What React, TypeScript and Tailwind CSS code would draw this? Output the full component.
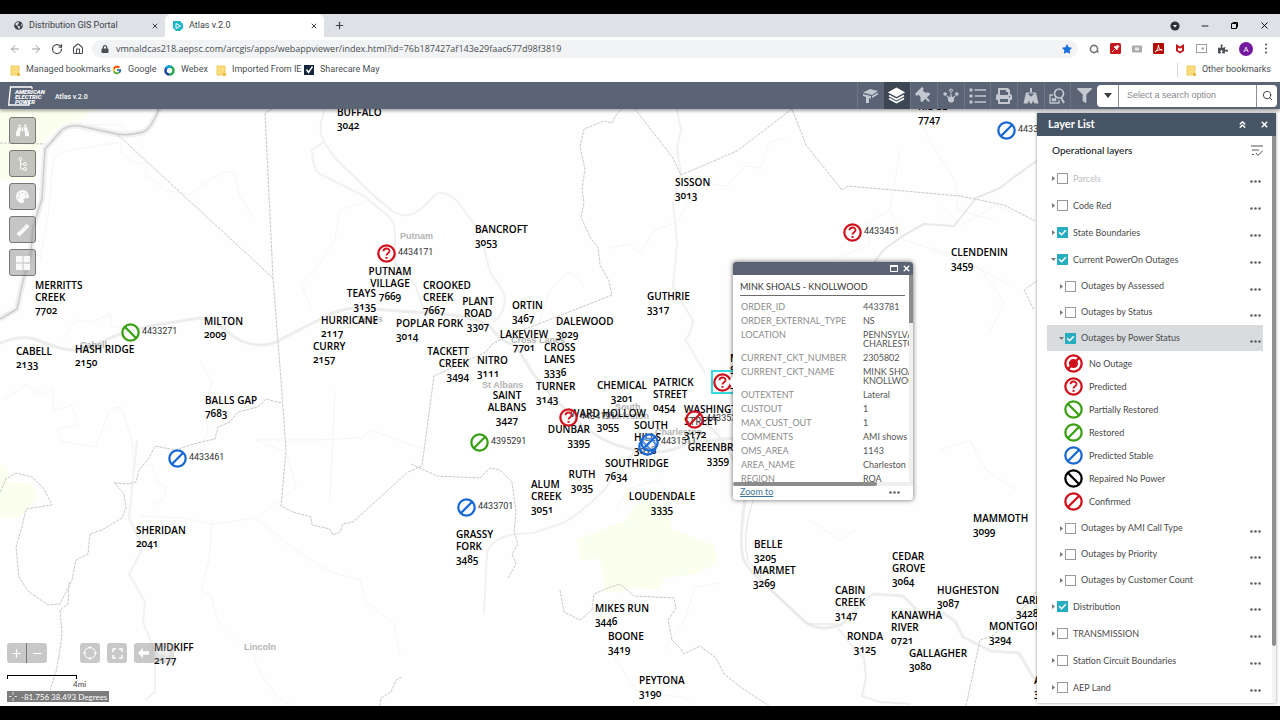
import React from 'react';
import {
  FaBinoculars,
  FaFilter,
  FaGlobeAmericas,
  FaLock,
  FaPalette,
  FaPrint,
  FaPuzzlePiece,
  FaStar,
  FaThumbtack,
} from 'react-icons/fa';
import { FcGoogle } from 'react-icons/fc';
import {
  ArrowLeft,
  ArrowRight,
  ChevronsUp,
  House,
  Minus,
  Plus,
  RotateCw,
  Search,
  X,
} from 'lucide-react';

type Align = 'left' | 'center' | 'right';
type PinKind = 'none' | 'question' | 'back' | 'slash';

interface Station {
  name: string[];
  code: string;
  x: number;
  y: number;
  align?: Align;
}

interface Pin {
  kind: PinKind;
  color: string;
  x: number;
  y: number;
  id?: string;
}

interface Layer {
  name: string;
  checked?: boolean;
  open?: boolean;
  muted?: boolean;
}

const RED = '#d0101a';
const GREEN = '#3aa013';
const BLUE = '#1868d4';

// y is the top of the first text line, measured from the top of the map
const stations: Station[] = [
  { name: ['MERRITTS', 'CREEK'], code: '7702', x: 35, y: 170 },
  { name: ['CABELL'], code: '2133', x: 16, y: 236 },
  { name: ['HASH RIDGE'], code: '2150', x: 75, y: 234 },
  { name: ['MILTON'], code: '2009', x: 204, y: 206 },
  { name: ['BALLS GAP'], code: '7683', x: 205, y: 285 },
  { name: ['SHERIDAN'], code: '2041', x: 136, y: 415 },
  { name: ['MIDKIFF'], code: '2177', x: 154, y: 532 },
  { name: ['BUFFALO'], code: '3042', x: 337, y: -3 },
  { name: ['HURRICANE'], code: '2117', x: 321, y: 205 },
  { name: ['CURRY'], code: '2157', x: 313, y: 231 },
  { name: ['PUTNAM', 'VILLAGE'], code: '7669', x: 390, y: 156, align: 'center' },
  { name: ['TEAYS'], code: '3135', x: 376, y: 178, align: 'right' },
  { name: ['CROOKED', 'CREEK'], code: '7667', x: 423, y: 170 },
  { name: ['POPLAR FORK'], code: '3014', x: 396, y: 208 },
  { name: ['PLANT', 'ROAD'], code: '3307', x: 478, y: 186, align: 'center' },
  { name: ['BANCROFT'], code: '3053', x: 475, y: 114 },
  { name: ['ORTIN'], code: '3467', x: 512, y: 190 },
  { name: ['LAKEVIEW'], code: '7701', x: 524, y: 219, align: 'center' },
  { name: ['DALEWOOD'], code: '3029', x: 556, y: 206 },
  { name: ['TACKETT', 'CREEK'], code: '3494', x: 469, y: 236, align: 'right' },
  { name: ['NITRO'], code: '3111', x: 477, y: 245 },
  { name: ['CROSS', 'LANES'], code: '3336', x: 544, y: 232 },
  { name: ['TURNER'], code: '3143', x: 536, y: 271 },
  { name: ['SAINT', 'ALBANS'], code: '3427', x: 507, y: 280, align: 'center' },
  { name: ['CHEMICAL'], code: '3201', x: 622, y: 270, align: 'center' },
  { name: ['PATRICK', 'STREET'], code: '0454', x: 653, y: 267 },
  { name: ['WARD HOLLOW'], code: '3055', x: 608, y: 298, align: 'center' },
  { name: ['SOUTH', 'HILLS'], code: '3078', x: 634, y: 310 },
  { name: ['DUNBAR'], code: '3395', x: 590, y: 314, align: 'right' },
  { name: ['WASHINGTON', 'STREET'], code: '3172', x: 684, y: 294 },
  { name: ['GREENBRIER'], code: '3359', x: 718, y: 332, align: 'center' },
  { name: ['SOUTHRIDGE'], code: '7634', x: 605, y: 348 },
  { name: ['RUTH'], code: '3035', x: 582, y: 359, align: 'center' },
  { name: ['ALUM', 'CREEK'], code: '3051', x: 531, y: 369 },
  { name: ['LOUDENDALE'], code: '3335', x: 662, y: 381, align: 'center' },
  { name: ['GRASSY', 'FORK'], code: '3485', x: 456, y: 419 },
  { name: ['SISSON'], code: '3013', x: 675, y: 67 },
  { name: ['GUTHRIE'], code: '3317', x: 647, y: 181 },
  { name: ['CLENDENIN'], code: '3459', x: 951, y: 137 },
  { name: ['RIDGE'], code: '7747', x: 918, y: -9 },
  { name: ['MINK', 'SHOALS'], code: '3381', x: 730, y: 243 },
  { name: ['MAMMOTH'], code: '3099', x: 973, y: 403 },
  { name: ['BELLE'], code: '3205', x: 754, y: 429 },
  { name: ['MARMET'], code: '3269', x: 753, y: 455 },
  { name: ['CEDAR', 'GROVE'], code: '3064', x: 892, y: 441 },
  { name: ['CABIN', 'CREEK'], code: '3147', x: 835, y: 475 },
  { name: ['HUGHESTON'], code: '3087', x: 937, y: 475 },
  { name: ['KANAWHA', 'RIVER'], code: '0721', x: 891, y: 500 },
  { name: ['CARBON'], code: '3428', x: 1016, y: 485 },
  { name: ['MONTGOMERY'], code: '3294', x: 989, y: 511 },
  { name: ['RONDA'], code: '3125', x: 865, y: 521, align: 'center' },
  { name: ['GALLAGHER'], code: '3080', x: 909, y: 538 },
  { name: ['MIKES RUN'], code: '3446', x: 595, y: 493 },
  { name: ['BOONE'], code: '3419', x: 608, y: 521 },
  { name: ['PEYTONA'], code: '3190', x: 639, y: 565 },
  { name: ['ALLOY'], code: '3212', x: 1034, y: 565 },
];

const places = [
  { name: 'Putnam', x: 400, y: 121 },
  { name: 'Cabell', x: 80, y: 230 },
  { name: 'Teays', x: 358, y: 204 },
  { name: 'Cross Lanes', x: 511, y: 225 },
  { name: 'St Albans', x: 482, y: 270 },
  { name: 'South', x: 615, y: 292 },
  { name: 'Charleston', x: 602, y: 301 },
  { name: 'Charleston', x: 655, y: 317 },
  { name: 'Lincoln', x: 244, y: 532 },
];

const pins: Pin[] = [
  { kind: 'question', color: RED, x: 386, y: 144, id: '4434171' },
  { kind: 'question', color: RED, x: 568, y: 308, id: '4434191' },
  { kind: 'question', color: RED, x: 852, y: 123, id: '4433451' },
  { kind: 'question', color: RED, x: 722, y: 273 },
  { kind: 'back', color: GREEN, x: 130, y: 223, id: '4433271' },
  { kind: 'slash', color: GREEN, x: 479, y: 333, id: '4395291' },
  { kind: 'slash', color: BLUE, x: 177, y: 349, id: '4433461' },
  { kind: 'slash', color: BLUE, x: 466, y: 398, id: '4433701' },
  { kind: 'slash', color: BLUE, x: 1006, y: 21, id: '4433381' },
  { kind: 'back', color: BLUE, x: 647, y: 337 },
  { kind: 'slash', color: BLUE, x: 649, y: 333, id: '4431511' },
  { kind: 'slash', color: RED, x: 694, y: 310, id: '4433535' },
];

const topLayers: Layer[] = [
  { name: 'Parcels', muted: true },
  { name: 'Code Red' },
  { name: 'State Boundaries', checked: true },
  { name: 'Current PowerOn Outages', checked: true, open: true },
];

const outageLayers: Layer[] = [
  { name: 'Outages by Assessed' },
  { name: 'Outages by Status' },
  { name: 'Outages by Power Status', checked: true, open: true },
];

const legend: { kind: PinKind; color: string; name: string }[] = [
  { kind: 'none', color: RED, name: 'No Outage' },
  { kind: 'question', color: RED, name: 'Predicted' },
  { kind: 'back', color: GREEN, name: 'Partially Restored' },
  { kind: 'slash', color: GREEN, name: 'Restored' },
  { kind: 'slash', color: BLUE, name: 'Predicted Stable' },
  { kind: 'back', color: '#000000', name: 'Repaired No Power' },
  { kind: 'slash', color: RED, name: 'Confirmed' },
];

const moreOutageLayers: Layer[] = [
  { name: 'Outages by AMI Call Type' },
  { name: 'Outages by Priority' },
  { name: 'Outages by Customer Count' },
];

const bottomLayers: Layer[] = [
  { name: 'Distribution', checked: true },
  { name: 'TRANSMISSION' },
  { name: 'Station Circuit Boundaries' },
  { name: 'AEP Land' },
];

const attributes: [string, string[]][] = [
  ['ORDER_ID', ['4433781']],
  ['ORDER_EXTERNAL_TYPE', ['NS']],
  ['LOCATION', ['PENNSYLVANIA AVE', 'CHARLESTON WV']],
  ['CURRENT_CKT_NUMBER', ['2305802']],
  ['CURRENT_CKT_NAME', ['MINK SHOALS -', 'KNOLLWOOD']],
  ['OUTEXTENT', ['Lateral']],
  ['CUSTOUT', ['1']],
  ['MAX_CUST_OUT', ['1']],
  ['COMMENTS', ['AMI shows outage']],
  ['OMS_AREA', ['1143']],
  ['AREA_NAME', ['Charleston North']],
  ['REGION', ['ROA']],
];

function StatusIcon({ kind, color, size }: { kind: PinKind; color: string; size: number }) {
  return (
    <svg width={size} height={size} viewBox="0 0 20 20" fill="none" stroke={color} strokeWidth="2.4">
      <circle cx="10" cy="10" r="8.600" fill="#fff" fillOpacity=".3" />
      {kind === 'slash' && <path d="M4 16 16 4" />}
      {kind === 'back' && <path d="m4 4 12 12" />}
      {kind === 'none' && (
        <>
          <circle cx="10" cy="10" r="3.600" fill={color} />
          <path d="M4 16 16 4" />
        </>
      )}
      {kind === 'question' && (
        <>
          <path d="M6.800 7.600c.2-3.800 6.400-3.800 6.400-.2 0 2.200-3.200 2.400-3.200 4.800" strokeWidth="1.900" />
          <path d="M10 13.600v2" strokeWidth="2.200" />
        </>
      )}
    </svg>
  );
}

function FolderIcon() {
  return (
    <svg width="10" height="11" viewBox="0 0 10 11">
      <path d="M1 1h8v9H1z" fill="#fbdc7c" stroke="#efc95c" />
      <path d="M7 8h3v3H7z" fill="#e9bd46" />
    </svg>
  );
}

function TabStrip() {
  return (
    <div className="flex h-[23px] items-end bg-[#dee1e6] font-[Roboto,sans-serif] text-[9px] text-[#3c4043]">
      <div className="flex h-[23px] w-[165px] items-center gap-[6px] pr-[6px] pl-[14px]">
        <FaGlobeAmericas size={9} />
        <span className="flex-1">Distribution GIS Portal</span>
        <button aria-label="Close tab"><X size={8} strokeWidth={3} /></button>
      </div>
      <div className="flex h-[23px] w-[159px] items-center gap-[6px] rounded-t-md bg-white pr-[6px] pl-2">
        <svg width="10" height="10" viewBox="0 0 10 10">
          <path d="M0 0h7l3 3v4L7 10H3L0 7z" fill="#1fb5c4" />
          <path d="M3 2.500 7.500 5 3 7.500z" fill="none" stroke="#fff" />
        </svg>
        <span className="flex-1">Atlas v.2.0</span>
        <button aria-label="Close tab"><X size={8} strokeWidth={3} /></button>
      </div>
      <button aria-label="New tab" className="ml-[10px] self-center"><Plus size={11} strokeWidth={2.5} /></button>
      <div className="ml-auto flex items-center gap-5 self-center pr-[10px] text-black">
        <svg width="10" height="10" viewBox="0 0 10 10">
          <circle cx="5" cy="5" r="4.600" fill="#2f3236" />
          <path d="M3 4h4L5 6.600z" fill="#fff" />
        </svg>
        <button aria-label="Minimize"><Minus size={10} strokeWidth={2} /></button>
        <button aria-label="Restore">
          <svg width="9" height="9" viewBox="0 0 9 9" fill="none" stroke="currentColor">
            <path d="M1.500 2.500h5v5h-5zM3 2.500v-1h4.500v4.500h-1" />
          </svg>
        </button>
        <button aria-label="Close window"><X size={11} strokeWidth={2} /></button>
      </div>
    </div>
  );
}

function AddressBar() {
  return (
    <div className="flex h-[23px] items-center bg-white pr-3 pl-[9px] text-[#4b4f54]">
      <div className="flex items-center gap-[9px]">
        <button aria-label="Back" className="text-[#9c9fa3]"><ArrowLeft size={12} /></button>
        <button aria-label="Forward" className="text-[#9c9fa3]"><ArrowRight size={12} /></button>
        <button aria-label="Reload"><RotateCw size={12} strokeWidth={2.5} /></button>
        <button aria-label="Home"><House size={12} strokeWidth={2.2} /></button>
      </div>
      <div className="ml-2 flex h-[18px] flex-1 items-center gap-[7px] rounded-full bg-[#f1f3f4] pr-[6px] pl-[9px]">
        <FaLock size={8} />
        <input
          aria-label="Address"
          className="min-w-0 flex-1 bg-transparent text-[9px] text-[#4a4d51] outline-none"
          defaultValue="vmnaldcas218.aepsc.com/arcgis/apps/webappviewer/index.html?id=76b187427af143e29faac677d98f3819"
        />
        <FaStar size={10} color="#1a6fe0" />
      </div>
      <div className="flex items-center gap-[11px] pl-[11px]">
        <svg width="10" height="10" viewBox="0 0 10 10">
          <circle cx="5" cy="5" r="3.600" fill="none" stroke="#70757a" strokeWidth="1.600" />
          <path d="M7 7h2.500v2.500z" fill="#70757a" />
        </svg>
        <svg width="11" height="11" viewBox="0 0 11 11">
          <rect width="11" height="11" rx="1.500" fill="#c8161d" />
          <path d="m2 9 2.500-2.500M4 4l3 3 .5-2L9 3.500 7.500 2 6 3.500z" stroke="#fff" fill="#fff" strokeWidth=".8" />
        </svg>
        <svg width="10" height="10" viewBox="0 0 10 10">
          <rect y="1.500" width="10" height="7" rx="1" fill="#a9acaf" />
          <path d="M3 3.500h4v3H3z" fill="#e6e7e8" />
        </svg>
        <svg width="11" height="11" viewBox="0 0 11 11">
          <rect width="11" height="11" rx="1" fill="#b30b00" />
          <path d="M2 9c2-1 3.500-4 3.400-7C5.500 5 7 7 9.200 7 6.500 6.500 4 7 2 9z" fill="none" stroke="#fff" />
        </svg>
        <svg width="10" height="11" viewBox="0 0 10 11">
          <path d="M1 1l4 2.400L9 1v7L5 10.500 1 8z" fill="#c01818" />
          <path d="M3 4.500l2 1.200 2-1.200v2.700L5 8.300 3 7.200z" fill="#fff" />
        </svg>
        <svg width="11" height="9" viewBox="0 0 11 9" fill="none" stroke="#9b9ea2">
          <rect x=".5" y=".5" width="10" height="8" />
          <path d="M5.500 4.500H8" strokeWidth="2" />
        </svg>
        <FaPuzzlePiece size={10} />
        <span className="flex size-[14px] items-center justify-center rounded-full bg-[#7418a0] text-[8px] text-white">A</span>
        <svg width="4" height="11" viewBox="0 0 4 11" fill="#4b4f54">
          <circle cx="2" cy="1.500" r="1" />
          <circle cx="2" cy="5.500" r="1" />
          <circle cx="2" cy="9.500" r="1" />
        </svg>
      </div>
    </div>
  );
}

function BookmarksBar() {
  return (
    <nav className="flex h-[22px] items-center bg-white pr-[9px] pb-[2px] pl-[10px] font-[Roboto,sans-serif] text-[9px] whitespace-nowrap text-[#4b4f54]">
      <a href="#managed" className="flex w-[102px] items-center gap-[6px]"><FolderIcon />Managed bookmarks</a>
      <a href="#google" className="flex w-[52px] items-center gap-[6px]"><FcGoogle size={10} />Google</a>
      <a href="#webex" className="flex w-[52px] items-center gap-[6px]">
        <svg width="11" height="11" viewBox="0 0 11 11" fill="none" strokeWidth="2.500">
          <path d="M5.500 1.500a4 4 0 0 0 0 8" stroke="#1d3fa8" />
          <path d="M5.500 1.500a4 4 0 0 1 0 8" stroke="#24a84b" />
          <path d="M2 3.500a4 4 0 0 1 5-1.500" stroke="#0aa3dc" />
        </svg>
        Webex
      </a>
      <a href="#imported" className="flex w-[88px] items-center gap-[6px]"><FolderIcon />Imported From IE</a>
      <a href="#sharecare" className="flex items-center gap-[6px]">
        <svg width="10" height="10" viewBox="0 0 10 10">
          <path d="M0 0h10v10H0z" fill="#14263f" />
          <path d="m2.500 4.500 2 3 4-6" fill="none" stroke="#fff" strokeWidth="1.500" />
        </svg>
        Sharecare May
      </a>
      <a href="#other" className="ml-auto flex items-center gap-[6px] border-l border-[#d5d7da] pl-2"><FolderIcon />Other bookmarks</a>
    </nav>
  );
}

const toolCell = 'flex h-full items-center justify-center border-l border-[#6d7686] text-[#c3c8d0]';

function AppHeader() {
  return (
    <header className="relative z-10 flex h-[27px] items-center bg-[#5a6475] pr-[3px] pl-2 font-[Lato,sans-serif] shadow-[0_2px_3px_rgba(0,0,0,0.35)]">
      <div className="relative h-5 w-[39px]">
        <svg width="39" height="20" viewBox="0 0 39 20" fill="none" stroke="#fff" strokeWidth="1.300" className="absolute">
          <path d="M24 1H2.500L.7 19H21l.3-3" />
          <path d="M24 1v2" />
        </svg>
        <div className="absolute top-[3px] left-[7px] font-[Roboto,sans-serif] text-[6px] leading-[5px] font-black text-white italic">
          AMERICAN<br />ELECTRIC<br />POWER
        </div>
      </div>
      <h1 className="mt-1 ml-2 font-[Roboto,sans-serif] text-[7px] font-medium text-white">Atlas v.2.0</h1>
      <div className="ml-auto grid h-full w-60 grid-cols-9">
        <button aria-label="Street view" className={toolCell}>
          <svg width="17" height="16" viewBox="0 0 17 16" fill="currentColor">
            <path d="M1 4.500 8 1l8 2-6 4zM1 6l8 2v2.500L7 10v5H4V9L1 8zM10 8l6-3.500v2L10 10z" />
          </svg>
        </button>
        <button aria-label="Layer list" className="flex h-full items-center justify-center bg-[#3d4653] text-white">
          <svg width="17" height="17" viewBox="0 0 17 17" fill="none" stroke="currentColor" strokeWidth="1.600">
            <path d="m8.500 1.500 7 3.800-7 3.800-7-3.800z" fill="currentColor" />
            <path d="m1 8.500 7.500 4 7.500-4M1 11.500l7.500 4 7.500-4" />
          </svg>
        </button>
        <button aria-label="Bookmarks" className={toolCell}><FaThumbtack size={16} className="-rotate-45" /></button>
        <button aria-label="Trace" className={toolCell}>
          <svg width="16" height="15" viewBox="0 0 16 15" fill="none" stroke="currentColor" strokeWidth="1.200">
            <circle cx="8" cy="11.500" r="2.500" fill="currentColor" />
            <path d="M8 9V3M6 3 8 1l2 2M6 10 3.500 7.500M10 10l2.500-2.500" strokeDasharray="3 .6" />
            <circle cx="2.200" cy="6" r="1.200" fill="currentColor" />
            <circle cx="13.800" cy="6" r="1.200" fill="currentColor" />
          </svg>
        </button>
        <button aria-label="Legend" className={toolCell}>
          <svg width="17" height="16" viewBox="0 0 17 16" fill="none" stroke="currentColor" strokeWidth="1.400">
            <path d="M5.500 2H17M5.500 8H17M5.500 14H17" />
            <path d="M.5 2h3M.5 8h3M.5 14h3" strokeWidth="3" />
          </svg>
        </button>
        <button aria-label="Print" className={toolCell}><FaPrint size={16} /></button>
        <button aria-label="Add data" className={toolCell}>
          <svg width="16" height="16" viewBox="0 0 16 16">
            <path d="M3 4.500h10l2.500 11h-4l-1.500-3-1 3H7l-1-3-1.500 3h-4z" fill="currentColor" />
            <path d="M8 0v5" fill="none" stroke="currentColor" strokeWidth="2" />
            <path d="M8 4.500v3.500M5.500 5.500 8 8l2.500-2.500" fill="none" stroke="#5a6475" strokeWidth="1.200" />
          </svg>
        </button>
        <button aria-label="Query" className={toolCell}>
          <svg width="16" height="16" viewBox="0 0 16 16" fill="none" stroke="currentColor" strokeWidth="1.700">
            <circle cx="10" cy="5.500" r="4.500" />
            <path d="m12 9.500 3 5.500" strokeWidth="2" />
            <path d="M4 7H1v8h9v-3" strokeWidth="1.300" />
            <path d="M3 13v-3l2 1 2-2v4z" fill="currentColor" strokeWidth=".5" />
          </svg>
        </button>
        <button aria-label="Filter" className={toolCell}><FaFilter size={15} /></button>
      </div>
      <div className="flex h-[22px] w-[180px] rounded-sm bg-white">
        <button aria-label="Search sources" className="flex w-[22px] items-center justify-center border-r border-[#8a8f98]">
          <svg width="8" height="5" viewBox="0 0 8 5" fill="#3c3c3c"><path d="M0 0h8L4 5z" /></svg>
        </button>
        <input
          aria-label="Search"
          placeholder="Select a search option"
          className="min-w-0 flex-1 px-2 font-['Liberation_Sans',sans-serif] text-[9px] outline-none placeholder:text-[#85888d]"
        />
        <button aria-label="Run search" className="flex w-[21px] items-center justify-center border-l border-[#8a8f98] text-[#333]">
          <Search size={11} />
        </button>
      </div>
    </header>
  );
}

// Terrain, roads and county lines under the labels
function BaseMap() {
  return (
    <svg
      className="absolute inset-0 h-full w-full"
      viewBox="0 109 1280 597"
      preserveAspectRatio="xMinYMin slice"
      fill="none"
      strokeLinejoin="round"
    >
      <g fill="#fbffee">
        <path d="M0 109h90l-4 8-32 13-16 20-2 30H0z" />
        <path d="M0 465l6 1 3 16 24 2 4 14-18 20H0z" />
        <path d="M577 540q20-9 50-20l6-14q20-12 34 5l5 18 42 16 4 18-22 11-32 4-5 12-28-2-12 5-14-2-5-32-20 1z" />
      </g>
      <g stroke="#f5f5f5" strokeWidth="1">
        <path d="M52 140q4-14 20-15h50l5 8M40 260q8-40 11-70c1-30 0-36 20-40l50-8 1 12 15 10 10-2-2 12 20 16 25 5 15-12 20-12 10 2 4 22 16 24" />
        <path d="M62 340l14-20 16 2 18-8 2 12 20 5 30-9 6 8M200 360l12 22-8 26 4 22-4 12" />
        <path d="M4 400l22-15 14 10 12-6 2 22 18-6 5 20-20 4 4 12 35 6 12-34q14-12 16 2l8 26 2 24h18l5 16 9 6-3 12-11 6" />
        <path d="M140 516l42 2 30 6 44-6 40-30-10-36-30-12h60l45-2 10-8 60 22M256 518l34 28 40 26 30 8 6 22 28 22 6 30" />
        <path d="M212 520l-3 40-8 30 10 6 8 28 20 20 14 10 10 24 16 20 24 14" />
        <path d="M330 500l5-110M370 200l-30 10-5 30-20 30-14 14 10 24" />
        <path d="M530 350l20-60 18-18 10 6 6 8M610 248l18-4 12 8 15-22 22-8 14-24 16-14 20 2 18-20 16 2 8-26 16-4" />
        <path d="M920 120l10 22 26 40 2 28 35 10M900 150l-10 60-24 14 4 20-32 14M890 210l14 30 45 14 60 30M940 205l20 20 16-8 20-12 16 8" />
        <path d="M930 250l50 18 24 34-14 30M660 480l-30 8-14 20M720 583l-25 4-10 32-20 30M610 640l6 20 20 30 20 4 30 4 8 12" />
        <path d="M940 450l30-10 16 30 30 20M810 520l30 20 16-10" />
      </g>
      <g stroke="#f1f1f1" strokeWidth="2">
        <path d="M325 109q-8 20-1 33 12 20 28 32 20 22 42 38 14 8 28-4l14-14q10-4 22 8l22 30 10 40q14 20 15 26 0 16-12 24" />
        <path d="M324 142l-12 8q0 22 12 26l40 20 24 20q8 6 7 22v26l20 20 10 30" />
        <path d="M677 109l4 20-4 20 4 24-8 30 4 40-4 44 20 34q-2 14-8 18l20 34" />
        <path d="M137 440l-8 78 14 30-14 26 16 28-2 20 12 30v40l-10 8" />
        <path d="M690 440l-50 7q-20 20-35 42-26 26-42 34l-30 10q-40 0-46 20l-3 60" />
      </g>
      <path
        d="M1038 160l-28 20-10 8-24 10-22 28-30-2q-20 10-38 24-14 14-18 28"
        stroke="#e8e8e8"
        strokeWidth="2"
      />
      <g stroke="#ededed" strokeWidth="3">
        <path d="M0 343q24-10 42-1 24 10 42 8 30-16 66-24l50-8q14 2 28 14 20 18 46 11l58-30q24-8 40-4l70 5q30 2 48 12 8 14 26 20l16 26q14 20 36 40 28 28 52 34 44 14 68-4l50-4" />
        <path d="M700 420q34 20 45 80-6 40-2 58 6 14 22 26l40 38q14 10 36 3l14-15 18-16 30 2 16 16 24 1 12 8 8 16 28 14 28 2 14 24 20 18" />
        <path d="M838 628l16 20 10 10 2 20-4 18 18 6 30 2" strokeWidth="2" />
      </g>
      <path d="M753 500q-12 40-5 60l20 28 40 36h30" stroke="#e2e2e2" />
      <g>
        <path d="M159 109q-8 20-16 23-14 4-26 2l-37-8q-12-1-18 4l-17 19-3 50-9 28-2 26-8 28-6 28-17 10" stroke="#f0f0f0" strokeWidth="6" />
        <path d="M159 109q-8 20-16 23-14 4-26 2l-37-8q-12-1-18 4l-17 19-3 50-9 28-2 26-8 28-6 28-17 10" stroke="#cccccc" strokeWidth="1.500" />
      </g>
      <g stroke="#c9c9c9" strokeDasharray="3 1">
        <path d="M0 143l45 1M118 135l155 143M272 109l-7 4 8 165 8 102 5 70-5 56 12 6 18 5 1 8 18 4 3 6 7-3 3-8 10-2 55-50 14-6 12-90 52-24 6-8 16-8 104-41-3-14-9-16-2-18-7-8-10-22 3-14-2-14 3-20-5-22 4-18 20-8 8 2 4-8 8-8" />
        <path d="M635 109l38 49 8 17 56-24 55-42 14 36 36 45 6-4 112 10 44 9 31 16" />
        <path d="M281 403l-15-4-8 8-20 5-8 10-12 5-3 12-18 4-22 7-10-2-10-2-6 12-10 12-3 12-8 2-14-1M114 482l10 12 2 14-4 10-20 12-12 4-2 20-12 6-4 20-12 24-12 1-20-14-9-14-3-30 6-20 4-18 26-4-8-16-12-12-16-4-10 6-7 16-10 8M69 582l-1 22-8 6 2 24-2 16-4 22-6 18" />
        <path d="M411 464l26 12 43 2 10-10 10 2 12 12 4 30-2 20 4 12-6 10 4 10-8 14" />
        <path d="M560 590l4 22 16 8 12-10 2-16 14-6 12-4 14 12 40 2 2 10-8 12 4 20 8 8 4 6 16-8 16 12 8 16 18 14 30 20" />
        <path d="M966 706l14-66 12-4 24-20 22-26M380 706l1-8 10-6 5-12 6-3M1038 280l-14 10 10 20" />
      </g>
    </svg>
  );
}

const translate: Record<Align, string> = {
  left: 'text-left',
  center: '-translate-x-1/2 text-center',
  right: '-translate-x-full text-right',
};

function MapLabels() {
  return (
    <>
      {places.map((p, i) => (
        <span
          key={i}
          className="absolute font-['Liberation_Sans',sans-serif] text-[9px] leading-3 font-bold whitespace-nowrap text-[#b3b3b3]"
          style={{ left: p.x, top: p.y }}
        >
          {p.name}
        </span>
      ))}
      {stations.map((s) => (
        <div
          key={s.name.join(' ')}
          className={`absolute text-[10px] leading-3 font-semibold whitespace-nowrap text-black oldstyle-nums ${translate[s.align ?? 'left']}`}
          style={{ left: s.x, top: s.y }}
        >
          {s.name.map((line) => (
            <div key={line}>{line}</div>
          ))}
          <div className="leading-[14px]">{s.code}</div>
        </div>
      ))}
      {pins.map((p, i) => (
        <div
          key={i}
          className="absolute flex h-5 -translate-y-1/2 items-center gap-[2px] font-[Roboto,sans-serif] text-[9px] text-[#333]"
          style={{ left: p.x - 9, top: p.y }}
        >
          <StatusIcon kind={p.kind} color={p.color} size={19} />
          {p.id}
        </div>
      ))}
      <div className="absolute top-[261px] left-[711px] h-6 w-6 border-2 border-[#35dbe0]" />
    </>
  );
}

function Dots() {
  return (
    <svg width="11" height="3" viewBox="0 0 11 3" fill="#5d6168">
      <circle cx="1.500" cy="1.500" r="1.300" />
      <circle cx="5.500" cy="1.500" r="1.300" />
      <circle cx="9.500" cy="1.500" r="1.300" />
    </svg>
  );
}

function Popup() {
  return (
    <section className="absolute top-[153px] left-[733px] flex h-[238px] w-[180px] flex-col rounded-[3px] bg-white font-[Lato,sans-serif] text-[9px] shadow-[0_0_5px_rgba(0,0,0,0.6)]">
      <svg width="6" height="14" viewBox="0 0 6 14" fill="#fff" className="absolute top-[113px] -left-[5px]">
        <path d="M6 0v14L0 7z" />
      </svg>
      <div className="flex h-[13px] items-center justify-end gap-1 rounded-t-[3px] bg-[#5a6475] pr-[2px] text-white">
        <button aria-label="Maximize">
          <svg width="8" height="7" viewBox="0 0 8 7" fill="none" stroke="currentColor">
            <path d="M.5 1h7v5.500h-7z" /><path d="M0 1h8" strokeWidth="2" />
          </svg>
        </button>
        <button aria-label="Close popup"><X size={9} strokeWidth={4} /></button>
      </div>
      <div className="flex min-h-0 flex-1">
        <div className="min-w-0 flex-1 overflow-hidden pl-[7px]">
          <h2 className="mr-1 mb-[3px] h-[21px] border-b border-[#6c6c6c] pt-[6px] leading-3 font-normal text-[#333]">
            MINK SHOALS - KNOLLWOOD
          </h2>
          <table className="leading-[9px]">
            <tbody>
              {attributes.map(([name, value]) => (
                <tr key={name}>
                  <th className="w-[123px] min-w-[123px] pt-[3px] pb-[2px] pl-px text-left align-top font-normal text-[#8b8b8b]">
                    {name}
                  </th>
                  <td className="pt-[3px] pb-[2px] align-top whitespace-nowrap text-[#555]">
                    {value.map((line) => (
                      <div key={line}>{line}</div>
                    ))}
                  </td>
                </tr>
              ))}
            </tbody>
          </table>
        </div>
        <div className="w-1 bg-[#f0f0f0]"><div className="h-12 bg-[#8c8c8c]" /></div>
      </div>
      <div className="h-1 bg-[#efefef]"><div className="h-1 w-4/5 rounded-full bg-[#8c8c8c]" /></div>
      <div className="flex h-[14px] items-center justify-between pr-[13px] pb-[2px] pl-[7px]">
        <a href="#zoom" className="text-[#3a759c] underline">Zoom to</a>
        <button aria-label="More actions"><Dots /></button>
      </div>
    </section>
  );
}

function LayerRow({ layer, nested }: { layer: Layer; nested?: boolean }) {
  const active = nested && layer.open;
  return (
    <li className={`flex items-center pr-[2px] ${nested ? 'h-[26px] pl-3' : 'h-[27px] pl-1'} ${active ? 'bg-[#d9dcdf]' : ''}`}>
      <button aria-label={`Expand ${layer.name}`} className="flex w-[6px] items-center">
        <svg width="5" height="5" viewBox="0 0 5 5" fill="#777">
          {layer.open ? <path d="M0 1h5L2.500 4z" /> : <path d="M1 0v5l3-2.500z" />}
        </svg>
      </button>
      <label className={`flex items-center gap-[5px] ${layer.muted ? 'text-[#bdbdbd]' : 'text-[#4a4a4a]'}`}>
        <span className="grid size-[11px]">
          <input
            type="checkbox"
            defaultChecked={layer.checked}
            className="peer col-start-1 row-start-1 size-[11px] appearance-none border border-[#999] bg-white checked:border-[#27adc0] checked:bg-[#27adc0]"
          />
          <svg
            width="11"
            height="11"
            viewBox="0 0 11 11"
            fill="none"
            stroke="#fff"
            strokeWidth="1.600"
            className="pointer-events-none invisible relative col-start-1 row-start-1 peer-checked:visible"
          >
            <path d="m2.200 5.300 2.400 2.400 4.200-4.400" />
          </svg>
        </span>
        {layer.name}
      </label>
      <button aria-label={`${layer.name} options`} className="mt-[6px] ml-auto"><Dots /></button>
    </li>
  );
}

function LayerPanel() {
  return (
    <aside className="absolute top-1 right-1 bottom-[3px] z-10 flex w-[239px] flex-col bg-white font-[Lato,sans-serif] text-[9px] shadow-[0_0_3px_rgba(0,0,0,0.4)]">
      <div className="flex h-[23px] shrink-0 items-center bg-[#485566] pr-[7px] pl-[11px] text-white">
        <h2 className="flex-1 text-[11px] font-bold">Layer List</h2>
        <button aria-label="Collapse" className="mr-3"><ChevronsUp size={11} strokeWidth={3} /></button>
        <button aria-label="Close panel"><X size={9} strokeWidth={4} /></button>
      </div>
      <div className="flex min-h-0 flex-1">
        <div className="flex-1 overflow-hidden pr-[9px] pl-[10px]">
          <div className="flex h-[29px] items-center justify-between pl-[5px] text-[10px] text-[#222]">
            <h3 className="font-medium">Operational layers</h3>
            <button aria-label="Layer actions">
              <svg width="12" height="11" viewBox="0 0 12 11" fill="none" stroke="#555">
                <path d="M0 1h12M1 5h7M1 9.500h2M5 8l2 2.500L12 5.500" />
              </svg>
            </button>
          </div>
          <ul>
            {topLayers.map((l) => <LayerRow key={l.name} layer={l} />)}
            {outageLayers.map((l) => <LayerRow key={l.name} layer={l} nested />)}
            <li className="pt-px pb-[2px]">
              <ul>
                {legend.map((item) => (
                  <li key={item.name} className="flex h-[23px] items-center gap-[6px] pl-[17px] text-[#4a4a4a]">
                    <StatusIcon kind={item.kind} color={item.color} size={19} />
                    {item.name}
                  </li>
                ))}
              </ul>
            </li>
            {moreOutageLayers.map((l) => <LayerRow key={l.name} layer={l} nested />)}
            {bottomLayers.map((l) => <LayerRow key={l.name} layer={l} />)}
          </ul>
        </div>
        <div className="w-1 bg-[#f4f4f4]"><div className="h-[90%] rounded-b bg-[#8f8f8f]" /></div>
      </div>
    </aside>
  );
}

const sideTool = 'flex size-[27px] items-center justify-center rounded-[3px] border border-[#777] bg-[#8c8c8c]/50 text-white/90';

function SideTools() {
  return (
    <div className="absolute top-2 left-[9px] flex flex-col gap-[6px]">
      <button aria-label="Find" className={sideTool}><FaBinoculars size={13} /></button>
      <button aria-label="Network" className={sideTool}>
        <svg width="10" height="14" viewBox="0 0 10 14" fill="none" stroke="currentColor">
          <circle cx="2.500" cy="2" r="1.500" />
          <path d="M2.500 3.500V12h3M2.500 7h3" />
          <circle cx="7" cy="7" r="1.500" />
          <circle cx="7" cy="12" r="1.500" />
        </svg>
      </button>
      <button aria-label="Draw" className={sideTool}><FaPalette size={13} /></button>
      <button aria-label="Measure" className={sideTool}>
        <svg width="14" height="14" viewBox="0 0 14 14" fill="currentColor">
          <path d="M.5 10.500 3.500 13.500 13.500 3.500 10.500.5 9.500 1.500l1 1-.6.600-1-1-1.200 1.200 1 1-.6.600-1-1-1.200 1.200 1 1-.6.600-1-1-1.200 1.200 1 1-.6.600-1-1z" />
        </svg>
      </button>
      <button aria-label="Basemaps" className={sideTool}>
        <svg width="14" height="14" viewBox="0 0 14 14" fill="currentColor">
          <path d="M0 0h6.500v6.500H0zM7.500 0H14v6.500H7.500zM0 7.500h6.500V14H0zM7.500 7.500H14V14H7.500z" />
        </svg>
      </button>
    </div>
  );
}

function MapControls() {
  const btn = 'flex size-5 items-center justify-center bg-[#9a9a9a]/55 text-white';
  return (
    <div className="absolute bottom-1 left-[7px] font-[Lato,sans-serif] text-[8px]">
      <div className="flex">
        <button aria-label="Zoom in" className={`${btn} rounded-l-[3px] border-r border-[#777]`}><Plus size={13} /></button>
        <button aria-label="Zoom out" className={`${btn} rounded-r-[3px]`}><Minus size={13} /></button>
        <button aria-label="My location" className={`${btn} ml-[33px] rounded-[3px]`}>
          <svg width="14" height="14" viewBox="0 0 14 14" fill="none" stroke="currentColor">
            <circle cx="7" cy="7" r="5.500" />
            <path d="M7 0v3M7 11v3M0 7h3M11 7h3" />
          </svg>
        </button>
        <button aria-label="Full screen" className={`${btn} ml-[7px] rounded-[3px]`}>
          <svg width="11" height="11" viewBox="0 0 11 11" fill="none" stroke="currentColor" strokeWidth="1.500">
            <path d="M1 4V1h3M7 1h3v3M10 7v3H7M4 10H1V7" />
          </svg>
        </button>
        <button aria-label="Previous extent" className={`${btn} ml-[7px] rounded-l-[3px]`}>
          <svg width="12" height="10" viewBox="0 0 12 10" fill="currentColor"><path d="M0 5l5-5v3.300h6v3.400H5V10z" /></svg>
        </button>
        <button aria-label="Next extent" className="flex size-5 items-center justify-center rounded-r-[3px] bg-[#9a9a9a]/30 text-white/50">
          <svg width="12" height="10" viewBox="0 0 12 10" fill="currentColor"><path d="M12 5 7 0v3.300H1v3.400h6V10z" /></svg>
        </button>
      </div>
      <div className="mt-3 h-1 w-[70px] border border-b-0 border-black" />
      <div className="pl-[66px] leading-[10px] text-[#444]">4mi</div>
      <div className="mt-[2px] flex h-[11px] w-fit items-center gap-1 bg-[#7c7c7c] px-[2px] text-white">
        <svg width="8" height="9" viewBox="0 0 8 9" fill="none" stroke="#ddd">
          <path d="M4 0v3M4 6v3M0 4.500h2.500M5.500 4.500H8" />
        </svg>
        -81.756 38.493 Degrees
      </div>
    </div>
  );
}

export default function App() {
  return (
    <div className="flex h-screen flex-col overflow-hidden bg-black py-[14px] font-['Open_Sans',sans-serif]">
      <TabStrip />
      <AddressBar />
      <BookmarksBar />
      <AppHeader />
      <main className="relative min-h-0 flex-1 overflow-hidden bg-[#fefefe]">
        <BaseMap />
        <MapLabels />
        <SideTools />
        <MapControls />
        <Popup />
        <LayerPanel />
      </main>
    </div>
  );
}
